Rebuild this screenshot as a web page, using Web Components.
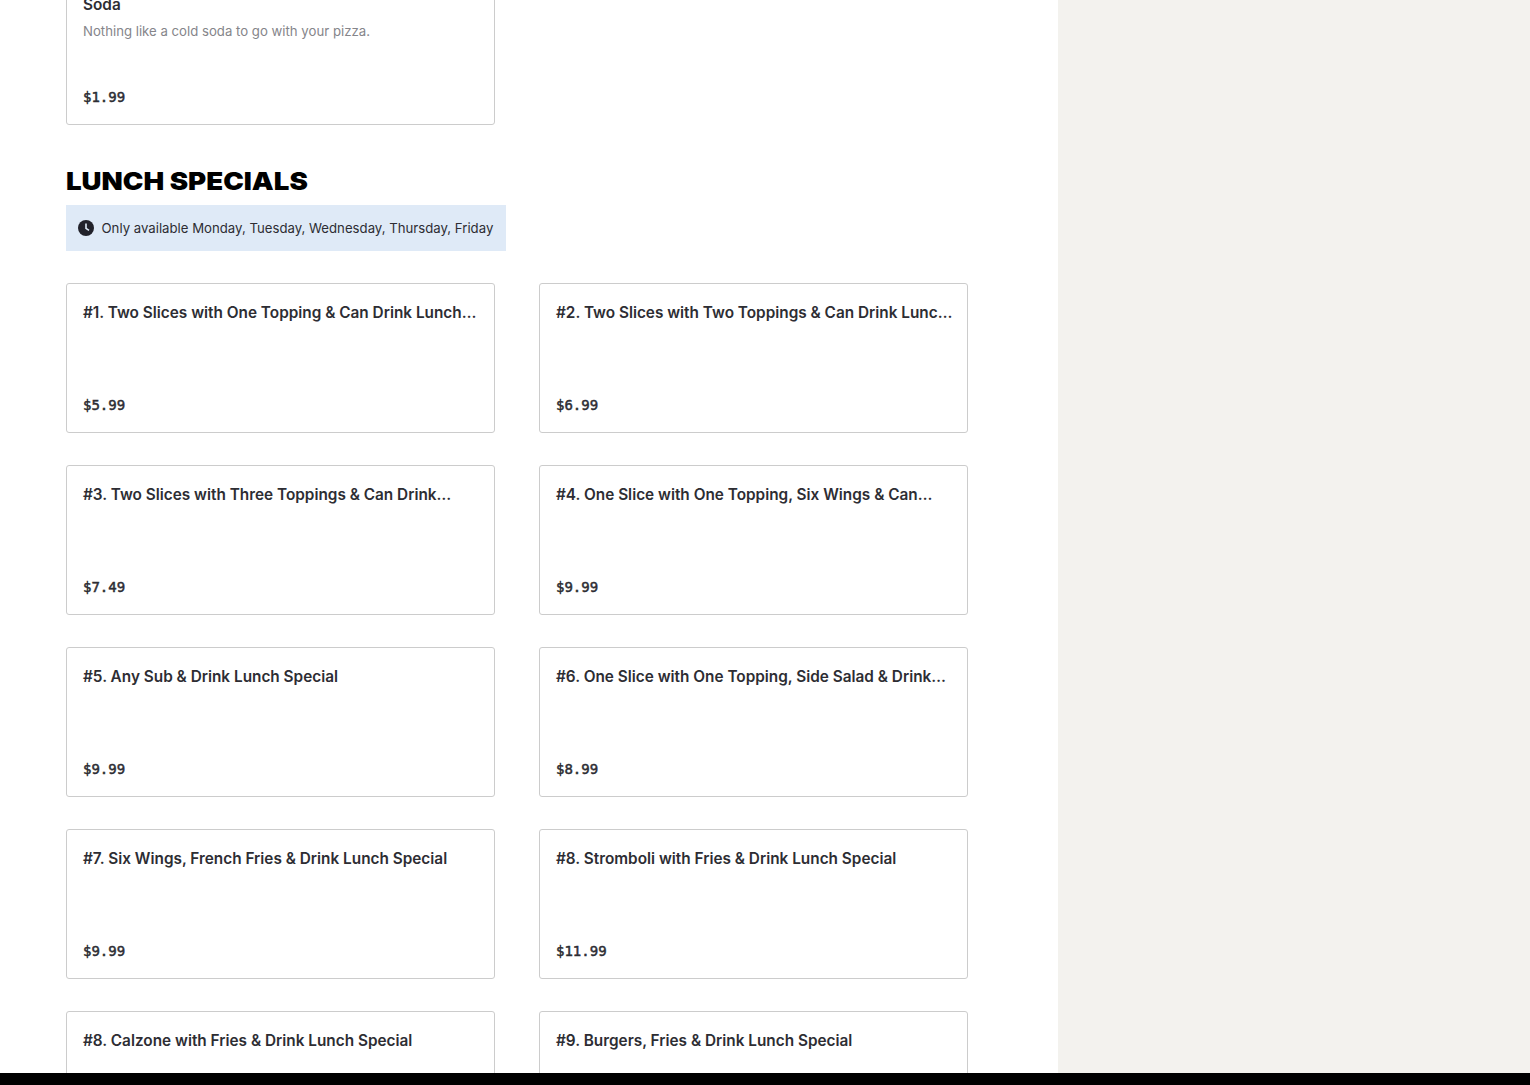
<!DOCTYPE html>
<html lang="en"><head><meta charset="utf-8"><title>Lunch Specials</title>
<style>
html,body{margin:0;height:100%;overflow:hidden;background:#fff}
body{font-family:"Inter","Liberation Sans",sans-serif}
</style></head><body>
<menu-page>
  <menu-card slot="top" name="Soda" desc="Nothing like a cold soda to go with your pizza." price="$1.99"></menu-card>
  <menu-section title="LUNCH SPECIALS" note="Only available Monday, Tuesday, Wednesday, Thursday, Friday">
    <menu-card name="#1. Two Slices with One Topping &amp; Can Drink Lunch…" price="$5.99"></menu-card>
    <menu-card name="#2. Two Slices with Two Toppings &amp; Can Drink Lunc…" price="$6.99"></menu-card>
    <menu-card name="#3. Two Slices with Three Toppings &amp; Can Drink…" price="$7.49"></menu-card>
    <menu-card name="#4. One Slice with One Topping, Six Wings &amp; Can…" price="$9.99"></menu-card>
    <menu-card name="#5. Any Sub &amp; Drink Lunch Special" price="$9.99"></menu-card>
    <menu-card name="#6. One Slice with One Topping, Side Salad &amp; Drink…" price="$8.99"></menu-card>
    <menu-card name="#7. Six Wings, French Fries &amp; Drink Lunch Special" price="$9.99"></menu-card>
    <menu-card name="#8. Stromboli with Fries &amp; Drink Lunch Special" price="$11.99"></menu-card>
    <menu-card name="#8. Calzone with Fries &amp; Drink Lunch Special"></menu-card>
    <menu-card name="#9. Burgers, Fries &amp; Drink Lunch Special"></menu-card>
  </menu-section>
</menu-page>
<script>
class MenuPage extends HTMLElement{constructor(){super();this.attachShadow({mode:'open'}).innerHTML=`<style>
:host{display:grid;grid-template-rows:1fr 12px;height:1085px;overflow:hidden}
.cols{display:grid;grid-template-columns:1058px 1fr;min-height:0;overflow:hidden}
.main{padding:0 66px;margin-top:-25px;background:#fff}
.top{display:grid;grid-template-columns:429px 429px;column-gap:44px}
.side{background:#f3f2ee}
.bar{background:#000}
</style><div class="cols"><div class="main"><div class="top"><slot name="top"></slot></div><slot></slot></div><div class="side"></div></div><div class="bar"></div>`}}
class MenuSection extends HTMLElement{constructor(){super();const r=this.attachShadow({mode:'open'});r.innerHTML=`<style>
:host{display:block;margin-top:43px}
h2{margin:0;font:900 25px/26px "Inter",sans-serif;color:#000;transform:scaleX(1.105);transform-origin:0 50%;width:max-content}
.note{display:flex;align-items:center;gap:7.5px;height:46px;box-sizing:border-box;width:440px;margin-top:11px;padding:0 12px 1px;background:#dfeaf7;color:#2d2d33;font-size:13.2px;white-space:nowrap}
svg{width:16px;height:16px;flex:none}
.grid{display:grid;grid-template-columns:429px 429px;column-gap:44px;row-gap:32px;margin-top:32px}
</style><h2></h2><div class="note"><svg viewBox="0 0 16 16"><circle cx="8" cy="8" r="8" fill="#22222b"/><path d="M8 3.6V8.3L11 10.4" fill="none" stroke="#dfeaf7" stroke-width="1.6"/></svg><span></span></div><div class="grid"><slot></slot></div>`;
r.querySelector('h2').textContent=this.getAttribute('title');r.querySelector('span').textContent=this.getAttribute('note');this.removeAttribute('title')}}
class MenuCard extends HTMLElement{constructor(){super();const r=this.attachShadow({mode:'open'});r.innerHTML=`<style>
:host{display:flex;flex-direction:column;box-sizing:border-box;height:150px;width:429px;padding:17px 16px 18px;background:#fff;border:1px solid #ccc;border-radius:3px}
.n{font-size:15.35px;line-height:24px;font-weight:600;color:#2d2d33;white-space:nowrap}
.d{font-size:13.2px;line-height:20px;color:#85858a;margin-top:4px}
.p{margin-top:auto;font:400 14px/18px "DejaVu Sans Mono",monospace;-webkit-text-stroke:.5px #2d2d33;color:#2d2d33}
</style><div class="n"></div><div class="d"></div><div class="p"></div>`;
r.querySelector('.n').textContent=this.getAttribute('name');r.querySelector('.d').textContent=this.getAttribute('desc')||'';r.querySelector('.p').textContent=this.getAttribute('price')||''}}
customElements.define('menu-page',MenuPage);customElements.define('menu-section',MenuSection);customElements.define('menu-card',MenuCard);
</script></body></html>
